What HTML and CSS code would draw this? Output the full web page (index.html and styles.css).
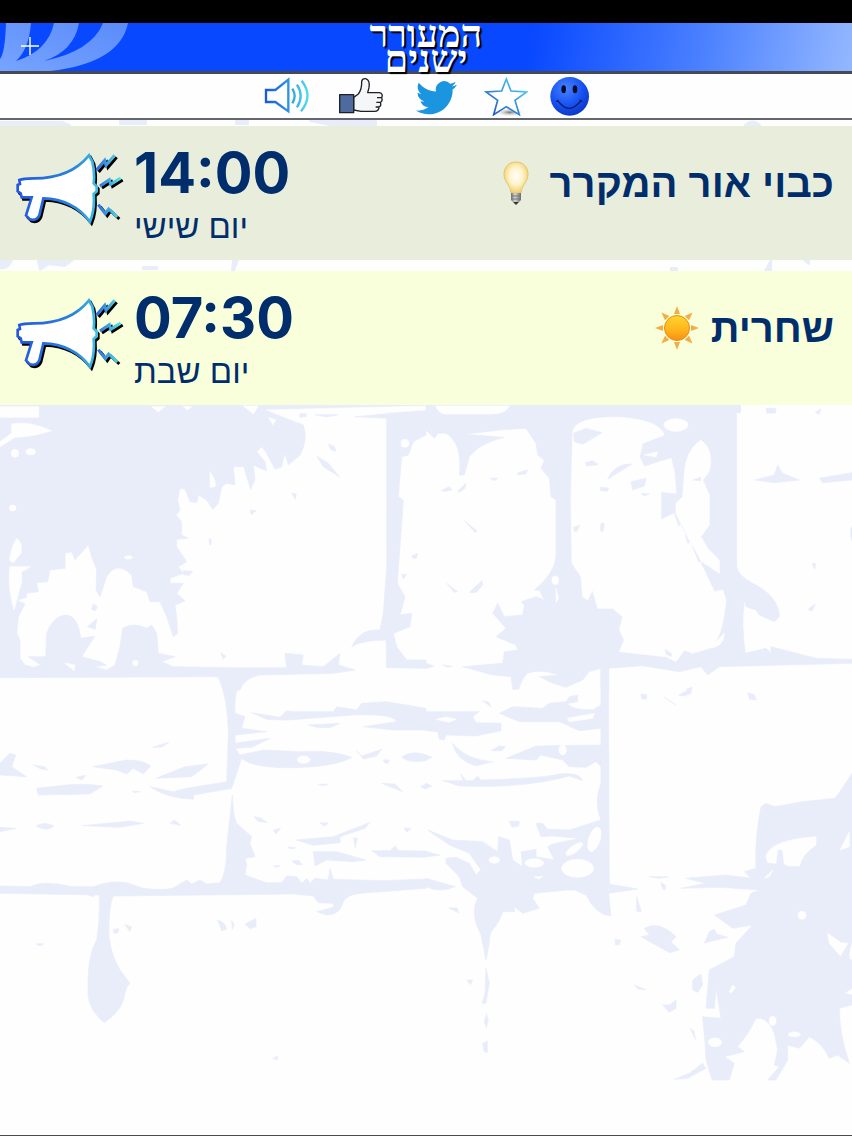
FILE: index.html
```
<!DOCTYPE html>
<html lang="he">
<head>
    <meta charset="UTF-8">
    <meta name="viewport" content="width=device-width, initial-scale=1.0">
    <title>המעורר ישנים</title>
    <link rel="stylesheet" href="styles.css">
</head>
<body>

    <!-- Stone wall behind the list -->
    <svg class="wall" viewBox="0 0 852 1136" preserveAspectRatio="xMidYMin slice" aria-hidden="true">
        <path d="M0 122h62l8 3H0zM120 121h26v3h-26zM236 121h12v3h-12zM310 121h66v5h-40zM745 125q8-7 15 0zM0 260h12q-4 10-12 8zM38 260h35l-8 6-16-2-9 6zM143 267h14v2h-14zM233 260h5l-4 11h-2zM671 268h6v3h-6zM765 271l6-11v11zM804 260h5v4zM0 405H740V412H0z"/>

        <g transform="translate(0 400) scale(.33333)">
            <path d="M0 15H730L735 40 760 40 780 30 800 32 870 60 910 75Q925 120 900 165L865 195 855 160 845 200 825 208 800 160 785 140 770 155 795 185 800 212 780 205 760 195 765 240 752 268 740 230 732 200 700 200 705 255 680 250 665 262 655 310 638 328 620 300 595 285 590 308 570 305 555 268 540 265 533 300 540 330 528 345 545 365 545 405 565 415 530 418 530 440 560 485 535 500 550 520 510 535 510 550 550 550 530 580 555 603 525 615 530 650 533 700 520 710 500 650 480 605 450 605 440 575 400 560 395 525Q350 480 320 530L300 590 288 570 290 510 275 470 265 435 225 480 215 455 195 460 195 505 150 510 143 545 110 548 115 575 80 580 80 592 52 600 75 612 55 650 50 700 60 720 60 775 75 795 100 802 122 795 85 770 137 770 140 700Q160 645 200 645 235 650 242 715L285 708 245 770 300 785 320 795 285 800 320 810 345 795 360 740 368 685Q400 665 440 685L455 675 470 700 475 760 525 770 485 785 520 800 700 803 860 803 855 760 910 765 905 795 970 800 1020 760 1015 795 1065 810 1000 820 780 825Q730 835 720 870H670Q665 835 650 830L0 833Z"/>
            <path d="M1065 50L1278 30V105L1240 125 1225 165 1205 170 1195 290 1210 300 1192 550 1215 590 1200 645 1235 640 1230 680 1180 700 1190 740 1220 780 1278 780V805L1160 803 1158 720Q1090 720 1055 740 1080 685 1140 690L1150 640 1160 500V55Z"/>
            <path d="M950 168L985 190 1018 230 970 200ZM985 132l18 8 5 14-15-5zM945 44l70 0-35 7zM900 38l22 0-5 12-18 2zM875 280l14 2-3 16zM750 330l18 2-14 12zM550 512l28 2-10 12-17-2zM628 415l6 4-2 16-4-2zM662 758l16 10-8 10zM1235 468l18-8-4 14-8 2zM1205 522l15 2-10 14zM280 612l12 8-6 12-12-4zM262 680l28-24-4 32z"/>
            <path class="stone" d="M0 20H116V52H0ZM35 72Q90 62 155 92 90 112 45 112L0 140V125L35 100ZM50 415Q70 430 63 460L40 488 28 480Q35 440 50 415ZM30 500L92 500 65 515 65 545 42 630Q22 560 30 500ZM630 215Q650 245 645 260L630 262ZM455 20L495 20 475 36ZM550 20L575 20 562 30ZM805 52l22 8-8 14zM730 18L775 18 760 42ZM800 30L1278 18V30L1100 42 820 38ZM195 790L225 795 222 812Z"/>
            <ellipse class="stone" cx="45" cy="160" rx="11" ry="12"/>
            <ellipse class="stone" cx="92" cy="155" rx="14" ry="9"/>
            <ellipse class="stone" cx="38" cy="324" rx="10" ry="9"/>
            <ellipse class="stone" cx="385" cy="472" rx="12" ry="5"/>
            <ellipse class="stone" cx="406" cy="789" rx="8" ry="8"/>
            <ellipse class="stone" cx="1215" cy="130" rx="12" ry="12"/>
        </g>

        <g transform="translate(426 400) scale(.33333)">
            <path d="M0 15H910Q932 20 932 50V500Q935 525 980 550 1060 590 1060 650L1045 665 1000 645 990 630 960 620 955 600Q945 680 958 760L1020 745 1035 760 1035 740 1170 775 1278 778V790L880 800 845 825 825 800 760 815 650 797 548 805V870H525V805L490 815 470 840 420 862 380 850 340 830 400 825Q340 805 305 820 290 830 278 868H260L255 830 200 825 110 800 230 790 235 755 275 750 270 735 210 710 240 685 200 640 215 610 235 650 290 645 295 615 285 605 330 590 355 600 340 570 325 570Q385 520 390 470V300L375 290 370 235 345 205 355 180 335 165 330 130 300 85 240 88 115 103 235 112Q160 130 130 170L115 225 100 225Q110 130 60 100L35 100 25 115 0 90Z"/>
            <path class="stone" d="M440 100Q440 50 580 52 700 60 715 105L650 130 640 170 655 200 735 175 745 215 750 280 705 275 705 360 745 340 820 480 865 575 890 570 900 600Q890 700 865 730L895 700Q895 740 850 745L800 760 775 750 750 785 720 770 580 755 595 720 580 690 590 650 560 625 515 625 500 570 485 600 470 590 465 530 438 490 435 300Z"/>
            <path class="stone" d="M825 120Q780 150 775 220L770 290 750 310 750 340 820 480 880 520 880 480 845 445 825 410 850 375 850 285 830 240 850 215Q865 150 825 120ZM30 18H250Q240 42 190 42H60Q35 40 30 18ZM655 165L695 155 690 170ZM390 565l8 30-8 12z"/>
            <ellipse class="stone" cx="750" cy="75" rx="36" ry="19"/>
            <ellipse class="stone" cx="388" cy="541" rx="10" ry="13"/>
            <path d="M442 100L480 85 528 98 470 133 445 125ZM545 238Q565 190 618 192 580 215 545 238ZM615 245L660 235 655 258 620 270ZM478 188l22-6 16 12-34 4zM522 262l26 2-4 10-20-2zM645 280l25 2-16 6zM525 370l10 0-4 25-8-2zM443 382l18-6-8 18-8 0zM985 240L1045 225 1055 195 1070 220 1120 240 1045 248ZM1180 235L1278 218V240L1190 248ZM1020 25l30 0-2 14-26 0zM1168 38l16-12-4 16zM1278 380v42l-4-12v-24zM1158 490l12 2-4 16zM1146 628l22-16-10 22zM115 362L152 392 148 398ZM62 550L95 575 85 577ZM130 577L168 542 170 555 150 578ZM192 235h24l-12 7zM275 218l30-8-6 12-24 2zM45 272l25-12 8 10-20 4zM95 274l25-25-3 16-14 10zM745 340l16 30-2 10zM778 405l12 20-4 6zM800 440l24 44-6 2zM718 748l20 14-4 8-14-8zM800 240l24-8v10zM0 790l25 8-25 8zM48 795l30 3-12 4zM780 868l18-6-4 8z"/>
        </g>

        <g transform="translate(0 660) scale(.33333)">
            <path d="M655 50Q685 120 685 230L680 365 560 385 520 395 450 380Q500 415 580 418L580 405 695 385 725 295Q760 325 880 323 1010 320 1055 292 1000 270 900 275L790 270 720 285 705 265 755 262 810 235 705 250 705 225 800 215 725 205 735 170 705 160Q700 60 750 48Z"/>
            <path d="M865 180L845 180 800 178 755 158 840 172 860 152 880 155 1000 155 1010 140 1070 150 1085 130 1160 125 1278 145V210L1180 210 1090 200 1190 185Q1180 160 1060 165ZM925 195L1020 190 990 203 950 202ZM1070 272L1085 288 1145 268 1130 288 1090 297ZM1205 290Q1240 270 1278 285V302Q1220 310 1205 290ZM1150 300h18l-4 10-10-2z"/>
            <path d="M0 310L30 280 48 285 35 320 80 350 0 345ZM278 320L380 300Q430 300 452 318L430 342 400 325 380 342 350 330ZM468 355L555 320 625 312 575 350ZM110 385L200 375Q260 370 308 378L270 402 115 405ZM248 497L390 483 430 490 360 502ZM108 498Q135 483 162 498 140 518 108 498ZM0 502L48 505 0 515ZM100 315l35 5 8 10-20-3zM458 262l48-15-20 14zM510 490l14-10 18 16zM228 352l30-6-12 14zM398 393l22 2-18 3zM955 373h30l-14 5zM1145 370L1185 372 1208 395ZM1262 380l16-8v16zM762 470l20 4 20 14-28-4zM820 510l22-5-15 17zM960 488l25 1-12 10zM888 540L1000 530 1110 487 1095 505 1020 530 1020 548 940 556ZM940 575L1010 575 1098 600 1060 605 980 600 945 618ZM1115 572L1170 572 1185 558 1195 572 1278 573V592L1140 590ZM1060 535l12 0-6 28zM1212 505l22 0-14 12zM865 560l22 4-18 2zM875 603l22-2 10 14-20-2zM820 617h20l-10 5z"/>
            <path d="M697 405Q700 470 710 490L755 530 750 550 765 590 735 595 740 615 735 645 770 658 800 668 845 668 860 648 890 650 905 670 920 655 930 670 945 655 985 660 990 625 1000 658 1150 662 1278 657V685L1080 700Q1040 705 1030 725 1020 765 980 765L950 755 1000 742 1000 730 955 728 940 708 880 702 340 708Q325 740 327 830 335 890 360 930L390 970Q378 980 375 1000 370 1050 313 1088 265 1050 264 1000 260 890 290 840 300 780 298 705L0 700V678L90 680Q130 660 215 680L280 680Q330 660 380 668L430 685Q510 695 530 678L560 660 575 672 600 660 620 672 660 668Q680 640 680 560Z"/>
            <path d="M340 808l16-2-2 12-12 2zM375 793l20 8-6 14zM653 780Q675 785 680 808L665 812ZM695 782l8 12-6 14zM735 792L768 775V800L750 806ZM110 851h20l-4 5h-14zM818 1196l14-8v12zM265 706l20-24-3 28z"/>
            <ellipse class="stone" cx="911" cy="299" rx="19" ry="11"/>
        </g>

        <g transform="translate(426 660) scale(.33333)">
            <path d="M525 20H548V672L635 687 550 700 548 480 525 480ZM0 155L160 155 140 170 150 188 225 190 225 212 150 228 60 225 55 240 40 238 35 215 0 212ZM220 160L260 140 350 145 370 130 420 125 430 110 455 105 455 125 425 130Q435 150 500 150L525 135V205L460 212 400 185 280 185ZM240 295L330 258 525 255 548 260V480H525Q500 420 530 360L530 325 510 305 480 322 430 320 410 300 345 285 330 300Z"/>
            <path d="M50 362L140 362 155 348 165 360Q350 355 400 342 460 335 470 362L430 348Q300 385 100 378ZM80 250Q120 300 200 305L150 318Q90 300 80 250ZM195 272l25-14 18 2-10 12zM105 342l15 20-10-2zM0 284l18 8-18 8zM0 370l18 8-18 8zM250 484l30 0-2 14-20 4zM170 122l18 4 8 16zM0 574l42 12-42 4zM0 655L88 680Q40 700 0 680ZM68 744l25 0 6 15z"/>
            <path d="M5 510L80 540 170 545 215 575 218 530 250 540 260 600 290 620 285 575 330 568 330 590 385 600 365 560 380 552 460 535 380 528 345 530 330 490 350 490 365 508 430 510 525 480 548 480V700L555 768Q510 765 480 705L445 690H425L325 700 320 715 340 745 290 760 265 740 265 755 230 755Q222 785 200 810 190 820 190 850L180 900 165 825Q130 760 155 715L110 680 100 650 60 610 60 595 90 592 130 610 150 645 165 630 130 580 70 555Z"/>
            <path d="M1278 340L1235 405 1225 415 1130 425 1045 440 1020 430 1005 440Q985 540 990 625L955 635 975 655 900 645 780 655 840 670 765 685 880 682 1000 690 975 700 960 735 865 765 920 805 980 795 930 850 925 890 850 930 840 1045 865 1045 870 985 885 1075 830 1070 838 1160 840 1200 858 1260 910 1260 925 1210 895 1190 955 1175 935 1160Q970 1120 990 1075 1025 1070 1045 1120L1055 1170 1045 1215 1060 1220 1025 1260 1050 1260 1085 1200 1085 1155 1120 1165 1150 1130Q1190 1150 1210 1195L1235 1185 1270 1210Q1240 1120 1240 1045L1278 1035V1005L1255 1000 1278 985V900Q1260 900 1278 845Z"/>
            <path d="M645 830L670 825 655 805Q700 780 750 830L735 845 760 870 730 878ZM835 850L850 815 865 808 872 822 905 832 850 845ZM800 960L825 942 830 975 815 997 800 990ZM710 1035L730 1035 750 1020 750 1045 730 1057ZM745 1258L790 1240 830 1210 840 1225 785 1255ZM180 925L190 970 180 1030 168 1030 177 1000ZM175 1085l6-24 6 20-6 22zM170 1150l14-6v34l-10-4zM625 975l35 14-25-2zM632 710l6 20 8 24-14 0zM792 1105l12 8 4 25zM670 650h58l-30 5zM705 668l14 8-2 14-8-4zM122 960l18 0-6 14zM568 838l16 2-4 14-12 0zM645 102l18 2-2 14-14-2zM715 112L750 135ZM758 106L798 83 795 100 775 108ZM965 98l20 6 6 16-20-2z"/>
            <path class="stone" d="M1020 590Q1030 540 1170 530V555Q1130 580 1120 618L1085 618 1075 612 1070 570 1055 568 1050 610 1025 608ZM1205 820L1245 848 1266 850 1243 887 1210 850ZM1242 570L1270 515V560ZM425 175L505 160 500 175 430 185ZM1015 655L1040 630 1030 650ZM30 178l30-7 30 7-20 9zM325 650h25l-12 7zM920 975l8 8-12 16-6-4z"/>
            <ellipse class="stone" cx="455" cy="625" rx="48" ry="27"/>
            <ellipse class="stone" cx="505" cy="538" rx="17" ry="38" transform="rotate(18 505 538)"/>
            <ellipse class="stone" cx="445" cy="567" rx="30" ry="10" transform="rotate(-35 445 567)"/>
            <ellipse class="stone" cx="325" cy="609" rx="28" ry="13"/>
            <ellipse class="stone" cx="205" cy="600" rx="16" ry="10"/>
            <ellipse class="stone" cx="410" cy="270" rx="11" ry="15"/>
            <ellipse class="stone" cx="1128" cy="766" rx="12" ry="12"/>
            <ellipse class="stone" cx="867" cy="1147" rx="20" ry="13"/>
            <ellipse class="stone" cx="1105" cy="1123" rx="18" ry="7"/>
            <ellipse class="stone" cx="1040" cy="1083" rx="10" ry="14"/>
        </g>
    </svg>

    <div class="status-bar"></div>

    <header class="navbar">
        <svg class="ribbons" viewBox="0 0 130 48" aria-hidden="true">
            <defs>
                <linearGradient id="ribbon" x1="0" y1="1" x2="1" y2="0">
                    <stop offset="0" stop-color="#76a4ff"/>
                    <stop offset="1" stop-color="#5a8bfa"/>
                </linearGradient>
            </defs>
            <path fill="url(#ribbon)" d="M6 0H31Q29 26 16 38 48 28 54 0H79Q74 28 44 38 92 28 103 0H128Q120 40 50 48H0V36Q5 30 6 0Z"/>
        </svg>
        <button class="add-btn" type="button" aria-label="הוספה">
            <svg width="18" height="18" viewBox="0 0 18 18"><path d="M9 0v18M0 9h18" stroke="#fff" stroke-width="1.4"/></svg>
        </button>
        <h1 class="logo" dir="rtl">המעורר<br>ישנים</h1>
    </header>

    <nav class="toolbar">
        <button type="button" aria-label="צליל">
            <svg width="50" height="40" viewBox="33 198 150 120" fill="none" stroke="url(#sea)" stroke-width="7">
                <defs>
                    <linearGradient id="sea" gradientUnits="userSpaceOnUse" x1="40" y1="0" x2="175" y2="0">
                        <stop offset="0" stop-color="#1557d8"/>
                        <stop offset=".5" stop-color="#2b8fe0"/>
                        <stop offset="1" stop-color="#4fe3ec"/>
                    </linearGradient>
                </defs>
                <path d="M45 240H73L112 209V304L73 276H45Z"/>
                <path d="M124 236q14 22 0 44M138 224Q160 258 138 292M152 212Q188 258 150 304"/>
            </svg>
        </button>
        <button type="button" aria-label="אהבתי">
            <svg width="54" height="40" viewBox="249 198 162 120" stroke="#1f2023" stroke-width="4" stroke-linejoin="round">
                <path fill="#f5f6f8" d="M308 262L322 252Q333 238 332 214 334 205 344 206 358 210 354 233L350 248H385Q398 251 392 263 396 273 388 277 392 288 384 291 384 304 370 304H330L308 300Z"/>
                <path fill="none" d="M378 263h14M376 277h12M374 291h10"/>
                <path fill="#4f6a9e" d="M266 254H308V308H266Z"/>
            </svg>
        </button>
        <button type="button" aria-label="טוויטר">
            <svg width="52" height="40" viewBox="477 198 156 120">
                <path fill="#1b95e0" transform="translate(495 202) scale(5.1)" d="M23.953 4.57a10 10 0 01-2.825.775 4.958 4.958 0 002.163-2.723c-.951.555-2.005.959-3.127 1.184a4.92 4.92 0 00-8.384 4.482C7.69 8.095 4.067 6.13 1.64 3.162a4.822 4.822 0 00-.666 2.475c0 1.71.87 3.213 2.188 4.096a4.904 4.904 0 01-2.228-.616v.06a4.923 4.923 0 003.946 4.827 4.996 4.996 0 01-2.212.085 4.936 4.936 0 004.604 3.417 9.867 9.867 0 01-6.102 2.105c-.39 0-.779-.023-1.17-.067a13.995 13.995 0 007.557 2.209c9.053 0 13.998-7.496 13.998-13.985 0-.21 0-.42-.015-.63A9.935 9.935 0 0024 4.59z"/>
            </svg>
        </button>
        <button type="button" aria-label="דירוג">
            <svg width="44" height="40" viewBox="699 198 132 120">
                <defs>
                    <linearGradient id="starLine" x1="0" y1="1" x2="1" y2="0">
                        <stop offset="0" stop-color="#1c4fbf"/>
                        <stop offset="1" stop-color="#4fdcf5"/>
                    </linearGradient>
                    <radialGradient id="starShade">
                        <stop offset="0" stop-color="#777"/>
                        <stop offset="1" stop-color="#fff" stop-opacity="0"/>
                    </radialGradient>
                </defs>
                <ellipse cx="776" cy="307" rx="46" ry="14" fill="url(#starShade)"/>
                <path fill="#fff" stroke="url(#starLine)" stroke-width="5" d="M766 207L780 243 827 246 792 271 805 314 766 290 728 314 740 271 705 246 752 243Z"/>
            </svg>
        </button>
        <button type="button" aria-label="סמיילי">
            <svg width="40" height="40" viewBox="897 198 120 120">
                <defs>
                    <radialGradient id="ball" cx=".4" cy=".3" r=".75">
                        <stop offset="0" stop-color="#4583ff"/>
                        <stop offset=".6" stop-color="#1650f0"/>
                        <stop offset="1" stop-color="#0a35c4"/>
                    </radialGradient>
                </defs>
                <circle cx="956" cy="259" r="58" fill="url(#ball)"/>
                <ellipse cx="938" cy="238" rx="7" ry="12" fill="#060c2c"/>
                <ellipse cx="972" cy="238" rx="7" ry="12" fill="#060c2c"/>
                <path d="M920 272Q954 318 990 272M915 275l8-4M986 270l8 4" fill="none" stroke="#0a1b66" stroke-width="4"/>
            </svg>
        </button>
    </nav>

    <!-- Alarm list -->
    <ul class="alarms">
        <li class="alarm past">
            <svg class="horn" viewBox="36 99 342 240" aria-hidden="true">
                <defs>
                    <linearGradient id="hornLine" gradientUnits="userSpaceOnUse" x1="50" y1="0" x2="300" y2="0">
                        <stop offset="0" stop-color="#2457dd"/>
                        <stop offset=".7" stop-color="#2a86dc"/>
                        <stop offset="1" stop-color="#42c8e4"/>
                    </linearGradient>
                    <linearGradient id="boltLine" gradientUnits="userSpaceOnUse" x1="288" y1="0" x2="360" y2="0">
                        <stop offset="0" stop-color="#2b5fe0"/>
                        <stop offset="1" stop-color="#52e6e0"/>
                    </linearGradient>
                    <path id="hornShape" d="M58 180Q70 176 100 175 210 176 267 106L277 125Q285 160 281 190L290 200V214L281 222Q285 270 270 305 220 238 130 235L118 286Q110 304 90 298L78 286 95 232 65 232 62 220 53 214V195L60 192Z"/>
                    <path id="bolts" d="M290 150L314 121 318 136 344 106M300 198L328 179 332 193 362 174M295 254L316 281 326 267 352 291"/>
                </defs>
                <use href="#hornShape" x="5" y="6" stroke="#000" stroke-width="8"/>
                <use href="#hornShape" fill="#fff" stroke="url(#hornLine)" stroke-width="8"/>
                <use href="#bolts" x="6" y="6" fill="none" stroke="#000" stroke-width="9"/>
                <use href="#bolts" fill="none" stroke="url(#boltLine)" stroke-width="9"/>
            </svg>
            <div class="when">
                <time class="time" datetime="14:00">14:00</time>
                <span class="day" dir="rtl">יום שישי</span>
            </div>
            <h2 class="name" dir="rtl">
                כבוי אור המקרר
                <svg width="44" height="44" viewBox="0 0 44 44" aria-hidden="true">
                    <defs>
                        <radialGradient id="glow" cx=".5" cy=".45" r=".55">
                            <stop offset="0" stop-color="#fffefa"/>
                            <stop offset=".5" stop-color="#fff4cf"/>
                            <stop offset="1" stop-color="#f0cf6c"/>
                        </radialGradient>
                        <linearGradient id="cap">
                            <stop offset="0" stop-color="#6f6f6f"/>
                            <stop offset=".4" stop-color="#d8d8d8"/>
                            <stop offset="1" stop-color="#6a6a6a"/>
                        </linearGradient>
                    </defs>
                    <path fill="url(#glow)" stroke="#e6c468" d="M22 1C14 1 10 7 10 13 10 21 16 23 17 32H27C28 23 34 21 34 13 34 7 30 1 22 1Z"/>
                    <path fill="url(#cap)" d="M17 32H27V39L25 41H19L17 39Z"/>
                    <path d="M17 35h10M17 38h10" stroke="#777"/>
                    <path fill="#333" d="M19 41h6l-3 3z"/>
                </svg>
            </h2>
        </li>
        <li class="alarm">
            <svg class="horn" viewBox="36 99 342 240" aria-hidden="true">
                <use href="#hornShape" x="5" y="6" stroke="#000" stroke-width="8"/>
                <use href="#hornShape" fill="#fff" stroke="url(#hornLine)" stroke-width="8"/>
                <use href="#bolts" x="6" y="6" fill="none" stroke="#000" stroke-width="9"/>
                <use href="#bolts" fill="none" stroke="url(#boltLine)" stroke-width="9"/>
            </svg>
            <div class="when">
                <time class="time" datetime="07:30">07:30</time>
                <span class="day" dir="rtl">יום שבת</span>
            </div>
            <h2 class="name" dir="rtl">
                שחרית
                <svg width="44" height="44" viewBox="0 0 44 44" aria-hidden="true">
                    <defs>
                        <linearGradient id="sun" x1="0" y1="0" x2="0" y2="1">
                            <stop offset="0" stop-color="#ffd52e"/>
                            <stop offset=".6" stop-color="#ffb31a"/>
                            <stop offset="1" stop-color="#f78f12"/>
                        </linearGradient>
                    </defs>
                    <g fill="#f3ad45">
                        <path id="rays" d="M22 0l3 8h-6zM22 44l3-8h-6zM0 22l8-3v6zM44 22l-8-3v6z"/>
                        <use href="#rays" transform="rotate(45 22 22)"/>
                    </g>
                    <circle cx="22" cy="22" r="12.5" fill="url(#sun)" stroke="#e88d15"/>
                </svg>
            </h2>
        </li>
    </ul>

</body>
</html>
```
FILE: styles.css
```
* {
    box-sizing: border-box;
}
body {
    position: relative;
    margin: 0;
    min-height: 100vh;
    background: #fefeff;
    border-bottom: 1px solid #4a4a52;
    font-family: Inter, "Open Sans", sans-serif;
    color: #002d6b;
    overflow-x: hidden;
}
button {
    padding: 0;
    border: 0;
    background: none;
    cursor: pointer;
}
svg {
    display: block;
}

/* Wall */
.wall {
    position: absolute;
    top: 0;
    left: 0;
    width: 100%;
    height: 100%;
    z-index: -1;
    fill: #e9edfa;
    stroke: #e9edfa;
    stroke-width: 2px;
    stroke-linejoin: round;
}
.wall .stone {
    fill: #fefeff;
    stroke: #fefeff;
}

/* Header */
.status-bar {
    height: 23px;
    background: #000;
}
.navbar {
    position: relative;
    display: flex;
    align-items: center;
    justify-content: center;
    height: 51px;
    border-bottom: 3px solid #454a55;
    background: linear-gradient(100deg, #0848ff 62%, #4a80ff 82%, #94b8ff 100%);
}
.ribbons {
    position: absolute;
    top: 0;
    left: 0;
    width: 130px;
    height: 48px;
}
.add-btn {
    position: absolute;
    top: 14px;
    left: 21px;
}
.logo {
    margin: 0;
    font-family: "Liberation Serif", serif;
    font-size: 38px;
    font-weight: bold;
    line-height: 25px;
    text-align: center;
    color: #fff;
    text-shadow: 2px 2px 1px #000;
}
.toolbar {
    display: flex;
    align-items: center;
    justify-content: center;
    gap: 22px;
    height: 46px;
    border-bottom: 2px solid #66666e;
    background: #fefefe;
}

/* Alarms */
.alarms {
    display: flex;
    flex-direction: column;
    gap: 11px;
    margin: 0;
    padding: 6px 0 0;
    list-style: none;
}
.alarm {
    display: flex;
    align-items: center;
    gap: 8px;
    height: 134px;
    padding: 0 18px 0 12px;
    background: #f9ffda;
}
.alarm.past {
    background: #e9eedc;
}
.horn {
    flex: none;
    width: 114px;
    height: 80px;
}
.when {
    display: flex;
    flex-direction: column;
    align-items: flex-start;
    padding-top: 8px;
}
.time {
    font-size: 56px;
    font-weight: bold;
    line-height: 60px;
}
.day {
    font-family: "Liberation Sans", sans-serif;
    font-size: 33px;
    line-height: 48px;
}
.name {
    display: flex;
    align-items: center;
    gap: 12px;
    margin: 0 0 20px auto;
    font-family: "Liberation Sans", sans-serif;
    font-size: 40px;
    font-weight: bold;
    line-height: 48px;
}
```
